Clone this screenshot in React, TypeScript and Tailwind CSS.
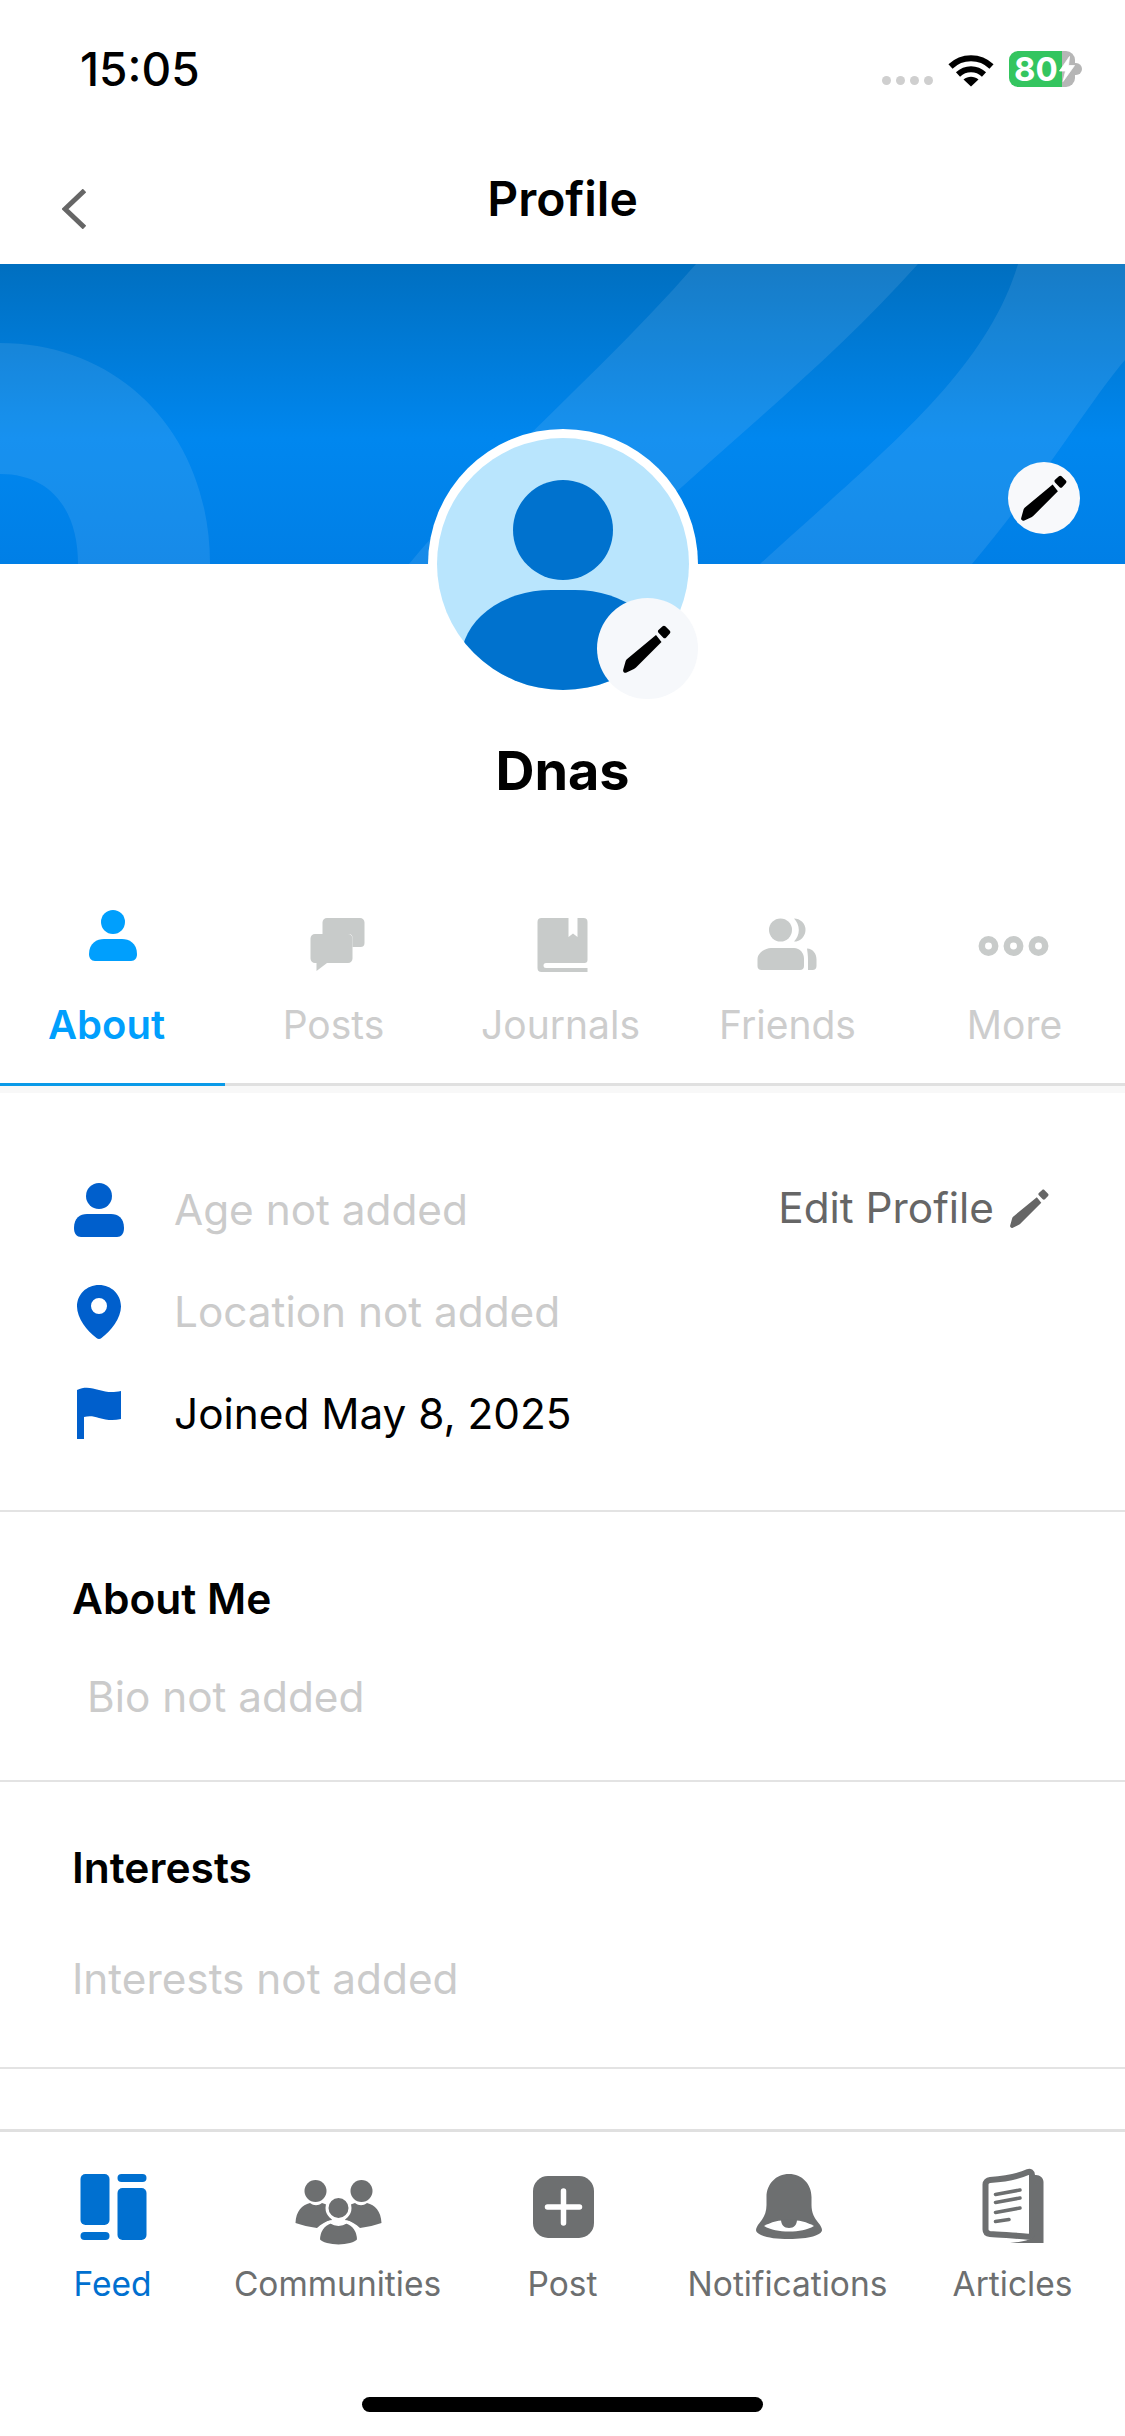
import React from 'react';

const Pencil: React.FC<{ className?: string }> = ({ className }) => (
  <svg viewBox="0 0 48 48" className={className} fill="currentColor">
    <path d="M35.5 5 39.6 1.2c.8-.7 1.9-.7 2.7 0l4.500 4.600c.8.8.8 1.900 0 2.700L43 12.700c-.8.7-1.900.7-2.700 0l-4.800-4.900c-.8-.8-.8-2.100 0-2.800Z" />
    <path d="M33 10 38.500 17 13 42.500c-.6.6-1.300 1.100-2.100 1.500L3.500 47.600c-1.900.9-3.900-.8-3.300-2.800L2.600 36.300c.2-.8.6-1.500 1.200-2.100L33 10Z" />
  </svg>
);

const SignalDots = () => (
  <div className="flex gap-[5px] mb-[2px] mr-[15px]">
    <span className="w-[9px] h-[9px] rounded-full bg-[#cfcfcf]" />
    <span className="w-[9px] h-[9px] rounded-full bg-[#cfcfcf]" />
    <span className="w-[9px] h-[9px] rounded-full bg-[#cfcfcf]" />
    <span className="w-[9px] h-[9px] rounded-full bg-[#cfcfcf]" />
  </div>
);

const Wifi = () => (
  <svg viewBox="0 0 46 34" className="w-[46px] h-[34px] mr-[15px]" fill="none" stroke="#000">
    <path d="M2.500 13.500C14 2.500 32 2.500 43.500 13.500" strokeWidth="6" />
    <path d="M10 21.500C17.500 14.500 28.500 14.500 36 21.500" strokeWidth="6" />
    <path d="M15.500 26.500C20 22.800 26 22.800 30.500 26.500L23 33.500Z" fill="#000" stroke="none" />
  </svg>
);

const Battery = () => (
  <div className="flex items-center">
    <div className="w-[66px] h-[36px] rounded-[9px] flex items-center pl-[5px] gap-[1px] bg-[linear-gradient(to_right,#34c55f_80%,#b6b6b6_80%)]">
      <span className="text-white text-[33px] leading-none font-bold">80</span>
      <svg viewBox="0 0 16 26" className="w-[16px] h-[26px]" fill="#fff" stroke="#fff" strokeWidth="0.8">
        <path d="M10.500 .5 .5 15h6L4 25.500 15.500 9.500H9.500L10.500 .5Z" />
      </svg>
    </div>
    <span className="w-[7px] h-[12px] rounded-r-full bg-[#b6b6b6]" />
  </div>
);

const tabIcons: Record<string, React.ReactNode> = {
  About: (
    <>
      <circle cx="40" cy="17" r="12" />
      <path d="M16 49c0-11 8-15 15-15h18c7 0 15 4 15 15 0 4-2 7-6 7H22c-4 0-6-3-6-7Z" />
    </>
  ),
  Posts: (
    <>
      <path d="M29 13h33a4.500 4.500 0 0 1 4.500 4.500V38a4 4 0 0 1-4 4h-8V33a4 4 0 0 0-4-4H24.500V17.500A4.500 4.500 0 0 1 29 13Z" />
      <path d="M17 29h33a4.500 4.500 0 0 1 4.500 4.500v20a4.500 4.500 0 0 1-4.500 4.500H29l-10.500 8v-8H17a4.500 4.500 0 0 1-4.500-4.500v-20A4.500 4.500 0 0 1 17 29Z" />
    </>
  ),
  Journals: (
    <>
      <path d="M18.500 13H45.500V32L50 28.500 54.500 32V13H60.500A4 4 0 0 1 64.500 17V55A3 3 0 0 1 61.500 58H23A2.500 2.500 0 0 0 20.500 60.500 2.500 2.500 0 0 0 23 63H64.500V67H18.500A4 4 0 0 1 14.500 63V17A4 4 0 0 1 18.500 13Z" />
    </>
  ),
  Friends: (
    <>
      <path d="M46 13.500a11.500 11.500 0 0 1 0 23c3-3 4.800-7 4.800-11.500S49 16.500 46 13.500Z" />
      <path d="M59 43.500c6 .5 9.500 5 9.500 11v6.500c0 2.500-1.500 4-4 4H60V55c0-4.500-.5-8-1-11.500Z" />
      <circle cx="32.500" cy="25" r="11.500" />
      <path d="M23 43h23c6 0 10 5 10 11v7c0 2.500-1.500 4-4 4H13.500c-2.500 0-4-1.500-4-4v-7c0-6 7.500-11 13.500-11Z" />
    </>
  ),
  More: (
    <g fill="none" stroke="currentColor" strokeWidth="6.500">
      <circle cx="15.500" cy="41" r="6.700" />
      <circle cx="40.500" cy="41" r="6.700" />
      <circle cx="65.500" cy="41" r="6.700" />
    </g>
  ),
};

const tabs = [
  { label: 'About', nudge: 'mr-[12px]' },
  { label: 'Posts', nudge: 'mr-[8px]' },
  { label: 'Journals', nudge: 'mr-[4px]' },
  { label: 'Friends', nudge: '' },
  { label: 'More', nudge: 'ml-[4px]' },
];

// Bottom bar icons, 100x84 box
const navItems: { label: string; active?: boolean; icon: React.ReactNode }[] = [
  {
    label: 'Feed',
    active: true,
    icon: (
      <>
        <rect x="17.500" y="9" width="29" height="51" rx="5" />
        <rect x="17.500" y="67" width="29" height="8" rx="4" />
        <rect x="54.500" y="9" width="29" height="8" rx="4" />
        <rect x="54.500" y="23" width="29" height="52" rx="5" />
      </>
    ),
  },
  {
    label: 'Communities',
    icon: (
      <>
        <circle cx="27.500" cy="26" r="11" />
        <circle cx="73.500" cy="26" r="11" />
        <path d="M7.500 58C8 46 14 40 22 38c4 3 8 3 12 0 4 1 8 3 10 6-2 4-2 8 0 11-6 1-11 4-15 8-8-1-15-3-21.500-5Z" />
        <path d="M93.500 58C93 46 87 40 79 38c-4 3-8 3-12 0-4 1-8 3-10 6 2 4 2 8 0 11 6 1 11 4 15 8 8-1 15-3 21.500-5Z" />
        <circle cx="50.500" cy="43" r="11.500" stroke="#fff" strokeWidth="3" />
        <path d="M30.500 75c0-9 5-16 12-18 5 3 11 3 16 0 7 2 12 9 12 18-3 4-12 6-20 6s-17-2-20-6Z" stroke="#fff" strokeWidth="3" />
      </>
    ),
  },
  {
    label: 'Post',
    icon: (
      <>
        <rect x="20" y="11" width="61" height="62" rx="15" />
        <path d="M50.500 26v32M34.500 42h32" stroke="#fff" strokeWidth="5.500" strokeLinecap="round" />
      </>
    ),
  },
  {
    label: 'Notifications',
    icon: (
      <>
        <path d="M51 9c13 0 22.500 10 22.500 23v8c0 8 3 13 7 18 2 2.500 3.500 5 3.500 7 0 5-13 9-33 9s-33-4-33-9c0-2 1.500-4.500 3.500-7 4-5 7-10 7-18v-8C28.500 19 38 9 51 9Z" />
        <path d="M26 61c7-4 15-6 25-6s18 2 25 6c-7 4-15 5.500-25 5.500S33 65 26 61Z" fill="#fff" />
        <path d="M43 54.500c5-.7 11-.7 16 0 0 5-3 8.500-8 8.500s-8-3.500-8-8.500Z" />
      </>
    ),
  },
  {
    label: 'Articles',
    icon: (
      <>
        <path d="M70 10h3c4 0 7.500 3 7.500 7v61H47c10-1 19-2 23-6V10Z" />
        <path d="M27 15c13-1 27-3 38-8 2-.8 4 .5 4 3v58c0 2.500-2 4-4 3.700-12-1.200-26-1.700-38-2.700-2.800-.3-4.500-2-4.500-4.500V19.500c0-2.500 2-4.300 4.500-4.500Z" fill="#fff" stroke="currentColor" strokeWidth="6" />
        <path d="M32.500 29.500 57 25M32.500 37.500 57 33M32.500 47.500 57 43M32.500 56.500 46 54.500" stroke="currentColor" strokeWidth="3.500" strokeLinecap="round" fill="none" />
      </>
    ),
  },
];

const App: React.FC = () => {
  return (
    <div className="w-[1125px] h-[2436px] bg-white flex flex-col overflow-hidden font-['Inter',sans-serif]">
      {/* status bar */}
      <div className="h-[130px] flex items-start justify-between pt-[44px] pl-[80px] pr-[43px] flex-shrink-0">
        <span className="text-[46px] leading-[50px] font-medium text-black">15:05</span>
        <div className="flex items-end pt-[7px]">
          <SignalDots />
          <Wifi />
          <Battery />
        </div>
      </div>

      <header className="h-[134px] flex items-start justify-center flex-shrink-0 relative">
        <svg viewBox="0 0 24 40" className="absolute left-[62px] top-[59px] w-[24px] h-[40px]" fill="none" stroke="#666" strokeWidth="5">
          <path d="M22.500 1.500 3 20l19.500 18.500" />
        </svg>
        <h1 className="text-[48px] leading-[58px] font-semibold text-black mt-[40px]">Profile</h1>
      </header>

      <div className="h-[300px] relative flex-shrink-0 bg-[linear-gradient(to_bottom,#006fc0_0%,#0087ef_58%,#007fe6_100%)]">
        <svg viewBox="0 0 1125 300" className="w-full h-full" fill="#fff" fillOpacity="0.09">
          <path d="M0 79C120 79 210 170 210 300H78C78 245 50 210 0 210Z" />
          <path d="M696 0H918C820 110 700 200 600 300H409C500 190 600 110 696 0Z" />
          <path d="M1018 0C985 110 880 190 760 300H972C1040 220 1095 130 1125 96V0Z" />
        </svg>
        <button className="absolute right-[45px] top-[198px] w-[72px] h-[72px] rounded-full bg-[#f8f9fb] flex items-center justify-center text-black">
          <Pencil className="w-[46px] h-[46px]" />
        </button>
      </div>

      {/* avatar overlaps the banner */}
      <div className="flex flex-col items-center flex-shrink-0 -mt-[135px] relative">
        <div className="w-[270px] h-[270px] rounded-full bg-white p-[9px] relative">
          <div className="w-full h-full rounded-full bg-[#b9e5fd] overflow-hidden">
            <svg viewBox="0 0 252 252" className="w-full h-full" fill="#0072ce">
              <circle cx="126" cy="92" r="50" />
              <rect x="24" y="152" width="204" height="140" rx="90" />
            </svg>
          </div>
          <button className="absolute right-0 bottom-0 w-[101px] h-[101px] rounded-full bg-[#f6f8fb] flex items-center justify-center text-black">
            <Pencil className="w-[48px] h-[48px]" />
          </button>
        </div>
        <div className="text-[54px] leading-[64px] font-bold text-black mt-[40px]">Dnas</div>
      </div>

      {/* tabs */}
      <div className="grid grid-cols-5 mt-[102px] border-b-[3px] border-[#e0e0e0] flex-shrink-0">
        {tabs.map((t, i) => (
          <div key={t.label} className={`flex flex-col items-center h-[178px] ${i === 0 ? '-mb-[3px] h-[181px] border-b-[3px] border-[#0a9ae8] text-[#009ffd]' : 'text-[#c8cbca]'}`}>
            <svg viewBox="0 0 80 70" className="w-[80px] h-[70px]" fill="currentColor">
              {tabIcons[t.label]}
            </svg>
            <span className={`leading-[50px] mt-[25px] ${t.nudge} ${i === 0 ? 'text-[40px] font-semibold' : 'text-[39px] text-[#cdcdcd]'}`}>{t.label}</span>
          </div>
        ))}
      </div>
      <div className="h-[7px] bg-[#f8f8f8] flex-shrink-0" />

      {/* details */}
      <section className="pt-[66px] pb-[45px] pl-[74px] pr-[74px] border-b-2 border-[#e3e3e3] flex-shrink-0">
        <div className="flex items-center justify-between h-[102px]">
          <div className="flex items-center gap-[50px]">
            <svg viewBox="0 0 50 54" className="w-[50px] h-[54px]" fill="#005fcc">
              <circle cx="25" cy="13" r="13" />
              <path d="M0 45c0-10 6-14 13-14h24c7 0 13 4 13 14 0 6-3 9-7 9H7c-4 0-7-3-7-9Z" />
            </svg>
            <span className="text-[42.3px] leading-[50px] text-[#cbcbcb]">Age not added</span>
          </div>
          <div className="flex items-center gap-[16px] -mt-[4px] mr-[2px]">
            <span className="text-[42.3px] leading-[50px] text-[#666]">Edit Profile</span>
            <Pencil className="w-[39px] h-[39px] text-[#666]" />
          </div>
        </div>
        <div className="flex items-center gap-[50px] h-[102px]">
          <svg viewBox="0 0 50 54" className="w-[50px] h-[54px]" fill="#005fcc" fillRule="evenodd">
            <path d="M25 0c12.500 0 22 9.500 22 21.500C47 33 37 46 27.500 53c-1.500 1.200-3.500 1.200-5 0C13 46 3 33 3 21.500 3 9.500 12.500 0 25 0Zm0 13a8 8 0 1 0 0 16 8 8 0 0 0 0-16Z" />
          </svg>
          <span className="text-[42.3px] leading-[50px] text-[#cbcbcb]">Location not added</span>
        </div>
        <div className="flex items-center gap-[50px] h-[102px]">
          <svg viewBox="0 0 50 54" className="w-[50px] h-[54px]" fill="#005fcc">
            <path d="M3 52V3c8-4 15-2 22 0 7 2 13 3 22 1v28c-8 2-15 1-22-1-6-2-10-2-15-1v22Z" />
          </svg>
          <span className="text-[42.3px] leading-[50px] text-black">Joined May 8, 2025</span>
        </div>
      </section>

      <section className="pt-[62px] pb-[58px] border-b-2 border-[#e3e3e3] flex-shrink-0">
        <h2 className="text-[42.5px] leading-[50px] font-semibold text-black pl-[72px]">About Me</h2>
        <p className="text-[42.3px] leading-[50px] text-[#cbcbcb] mt-[48px] pl-[87px]">Bio not added</p>
      </section>

      <section className="pt-[61px] pb-[63px] border-b-2 border-[#e3e3e3] flex-shrink-0">
        <h2 className="text-[42.5px] leading-[50px] font-semibold text-black pl-[72px]">Interests</h2>
        <p className="text-[42.3px] leading-[50px] text-[#cbcbcb] mt-[61px] pl-[72px]">Interests not added</p>
      </section>

      {/* bottom navigation */}
      <nav className="mt-auto h-[307px] border-t-[3px] border-[#e0e0e0] flex flex-col flex-shrink-0">
        <div className="grid grid-cols-5 pt-[33px]">
          {navItems.map((n) => (
            <div key={n.label} className={`flex flex-col items-center ${n.active ? 'text-[#0070d0]' : 'text-[#6d6f70]'}`}>
              <svg viewBox="0 0 100 84" className="w-[100px] h-[84px]" fill="currentColor">
                {n.icon}
              </svg>
              <span className="text-[33.5px] leading-[44px] mt-[13px] whitespace-nowrap">{n.label}</span>
            </div>
          ))}
        </div>
        <div className="w-[401px] h-[15px] rounded-full bg-black mx-auto mt-auto mb-[24px]" />
      </nav>
    </div>
  );
};

export default App;
